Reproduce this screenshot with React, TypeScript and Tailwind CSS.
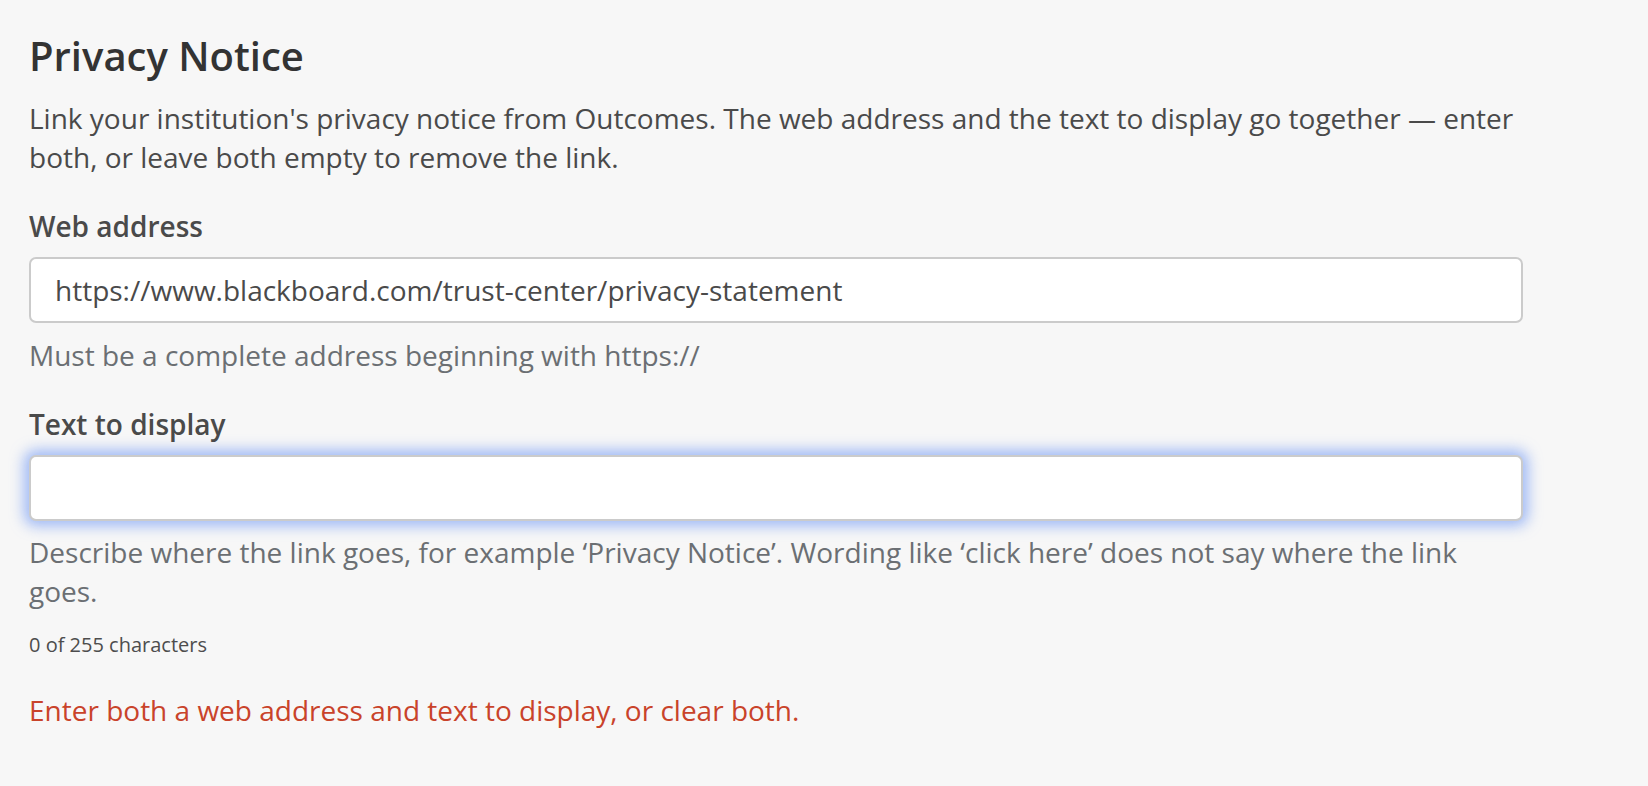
import React from 'react';

const FONT = "font-['Open_Sans',_'Noto_Sans',_sans-serif]";

export default function App() {
  return (
    <div className={`min-h-screen bg-[#f7f7f7] ${FONT}`}>
      <div className="w-[1494px] pl-[29px] pt-[32px] box-content">
        <h1 className="text-[40px] leading-[48px] font-semibold text-[#333333]">Privacy Notice</h1>
        <p className="mt-[19px] text-[28px] leading-[39px] text-[#4a4a4a]">
          Link your institution's privacy notice from Outcomes. The web address and the text to display go together — enter
          both, or leave both empty to remove the link.
        </p>

        {/* Web address */}
        <label className="block mt-[30px] text-[28px] leading-[39px] font-semibold text-[#4a4a4a]">Web address</label>
        <input
          readOnly
          value="https://www.blackboard.com/trust-center/privacy-statement"
          className="mt-[11px] block w-full h-[66px] rounded-[7px] border-2 border-[#cbcbcb] bg-white px-[24px] text-[28px] text-[#4a4a4a] outline-none"
        />
        <p className="mt-[13px] text-[28px] leading-[39px] text-[#6b6f73]">Must be a complete address beginning with https://</p>

        {/* Text to display */}
        <label className="block mt-[30px] text-[28px] leading-[39px] font-semibold text-[#4a4a4a]">Text to display</label>
        <input
          readOnly
          value=""
          className="mt-[11px] block w-full h-[66px] rounded-[7px] border-2 border-[#cbcbcb] bg-white px-[24px] text-[28px] text-[#4a4a4a] outline-none shadow-[0_0_14px_5px_rgba(110,150,245,0.65)]"
        />
        <p className="mt-[12px] text-[28px] leading-[39px] text-[#6b6f73]">
          Describe where the link goes, for example ‘Privacy Notice’. Wording like ‘click here’ does not say where the link goes.
        </p>
        <p className="mt-[19px] text-[20px] leading-[29px] text-[#4d4d4d]">0 of 255 characters</p>

        <p className="mt-[32px] text-[28px] leading-[39px] text-[#c9432a]">
          Enter both a web address and text to display, or clear both.
        </p>
      </div>
    </div>
  );
}
